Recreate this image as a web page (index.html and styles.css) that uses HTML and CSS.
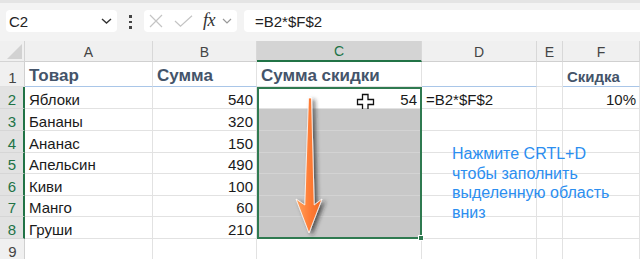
FILE: index.html
```html
<!DOCTYPE html>
<html lang="ru">
<head>
    <meta charset="UTF-8">
    <title>Заполнить вниз</title>
    <link rel="stylesheet" href="styles.css">
</head>
<body>
    <div class="formula-bar">
        <div class="name-box">
            <span>C2</span>
            <svg class="chev" width="11" height="6" viewBox="0 0 11 6"><path d="M1 1 L5.5 5 L10 1" fill="none" stroke="#333" stroke-width="1.4"/></svg>
        </div>
        <div class="dots"><i></i><i></i><i></i></div>
        <div class="func-box">
            <svg width="14" height="14" viewBox="0 0 14 14"><path d="M1 1 L13 13 M13 1 L1 13" stroke="#c4c4c4" stroke-width="1.2"/></svg>
            <svg class="check" width="19" height="12" viewBox="0 0 19 12"><path d="M1 6 L6.5 11.2 L18 0.8" fill="none" stroke="#c4c4c4" stroke-width="1.2"/></svg>
            <span class="fx">fx</span>
            <svg width="10" height="6" viewBox="0 0 10 6"><path d="M1 1 L5 5 L9 1" fill="none" stroke="#999" stroke-width="1.2"/></svg>
        </div>
        <div class="formula">=B2*$F$2</div>
    </div>

    <div class="sheet">
        <div class="corner"></div>
        <div class="colh">A</div>
        <div class="colh">B</div>
        <div class="colh active">C</div>
        <div class="colh">D</div>
        <div class="colh">E</div>
        <div class="colh">F</div>

        <div class="rowh">1</div>
        <div class="cell head tbl">Товар</div>
        <div class="cell head tbl">Сумма</div>
        <div class="cell head">Сумма скидки</div>
        <div class="cell tbl"></div>
        <div class="cell"></div>
        <div class="cell head small tbl">Скидка</div>

        <div class="rowh active">2</div>
        <div class="cell">Яблоки</div>
        <div class="cell num">540</div>
        <div class="cell num c2">54
            <svg class="cursor" width="19" height="18" viewBox="0 0 19 18"><path d="M6.5 1.5 H12 V6.5 H17.5 V11.5 H12 V16.5 H6.5 V11.5 H1.5 V6.5 H6.5 Z" fill="#fff" stroke="#111" stroke-width="1.3"/></svg>
        </div>
        <div class="cell">=B2*$F$2</div>
        <div class="cell"></div>
        <div class="cell num">10%</div>

        <div class="rowh active">3</div>
        <div class="cell">Бананы</div>
        <div class="cell num">320</div>
        <div class="cell fill"></div>
        <div class="cell"></div>
        <div class="cell"></div>
        <div class="cell"></div>

        <div class="rowh active">4</div>
        <div class="cell">Ананас</div>
        <div class="cell num">150</div>
        <div class="cell fill"></div>
        <div class="cell"></div>
        <div class="cell"></div>
        <div class="cell"></div>

        <div class="rowh active">5</div>
        <div class="cell">Апельсин</div>
        <div class="cell num">490</div>
        <div class="cell fill"></div>
        <div class="cell"></div>
        <div class="cell"></div>
        <div class="cell"></div>

        <div class="rowh active">6</div>
        <div class="cell">Киви</div>
        <div class="cell num">100</div>
        <div class="cell fill"></div>
        <div class="cell"></div>
        <div class="cell"></div>
        <div class="cell"></div>

        <div class="rowh active">7</div>
        <div class="cell">Манго</div>
        <div class="cell num">60</div>
        <div class="cell fill"></div>
        <div class="cell"></div>
        <div class="cell"></div>
        <div class="cell"></div>

        <div class="rowh active">8</div>
        <div class="cell">Груши</div>
        <div class="cell num">210</div>
        <div class="cell fill"></div>
        <div class="cell"></div>
        <div class="cell"></div>
        <div class="cell"></div>

        <div class="rowh">9</div>
        <div class="cell"></div>
        <div class="cell"></div>
        <div class="cell"></div>
        <div class="cell"></div>
        <div class="cell"></div>
        <div class="cell"></div>

        <div class="selection"><span class="handle"></span></div>

        <svg class="arrow" viewBox="0 0 165 152">
            <defs>
                <linearGradient id="og" x1="0" y1="0" x2="1" y2="0">
                    <stop offset="0" stop-color="#ffa45e"/>
                    <stop offset="0.5" stop-color="#ff7d36"/>
                    <stop offset="1" stop-color="#f06a25"/>
                </linearGradient>
                <filter id="sh" x="-50%" y="-10%" width="200%" height="130%">
                    <feDropShadow dx="3" dy="2" stdDeviation="2.2" flood-color="#222" flood-opacity="0.7"/>
                </filter>
            </defs>
            <path d="M51.5 11 L54.5 11 L57.2 118 L65 112 L52 146 L39 112 L47.8 118 Z" fill="url(#og)" stroke="#fff" stroke-width="0.8" filter="url(#sh)"/>
        </svg>

        <div class="note">Нажмите CRTL+D<br>чтобы заполнить<br>выделенную область<br>вниз</div>
    </div>
</body>
</html>
```

FILE: styles.css
```css
* {
    box-sizing: border-box;
}
body {
    margin: 0;
    width: 640px;
    height: 259px;
    overflow: hidden;
    background-color: #f3f3f3;
    font-family: 'Liberation Sans', Arial, sans-serif;
    color: #1a1a1a;
}
.formula-bar {
    height: 41px;
    display: flex;
    align-items: flex-start;
    padding: 7px 0 0 6px;
    border-top: 3px solid #e4e4e4;
}
.name-box, .func-box, .formula {
    height: 22px;
    background-color: #fff;
    border-radius: 4px;
    display: flex;
    align-items: center;
}
.name-box {
    width: 111px;
    padding: 0 5px 0 3px;
    font-size: 15px;
    color: #222;
    justify-content: space-between;
}
.dots {
    width: 3px;
    margin: 0 12px 0 12px;
    padding-top: 5px;
    display: flex;
    flex-direction: column;
    gap: 3px;
}
.dots i {
    display: block;
    width: 2.5px;
    height: 2.5px;
    background-color: #444;
}
.func-box {
    width: 93px;
    padding-left: 5px;
}
.func-box .check {
    margin-left: 11px;
}
.fx {
    font-family: 'Liberation Serif', serif;
    font-style: italic;
    font-size: 18px;
    color: #333;
    margin: -2px 7px 0 10px;
    letter-spacing: -0.5px;
}
.formula {
    flex: 1;
    margin-left: 7px;
    margin-right: -10px;
    padding-left: 11px;
    font-size: 15px;
    color: #222;
}
.sheet {
    display: grid;
    grid-template-columns: 25px 128px 104px 165px 115px 26px 77px;
    grid-template-rows: 21px 25px 22px 22px 22px 21px 22px 21px 22px 22px;
    background-color: #fff;
    position: relative;
}
.corner {
    background-color: #f0f0f0;
    border-right: 1px solid #d4d4d4;
    border-bottom: 1px solid #d4d4d4;
    position: relative;
}
.corner::after {
    content: "";
    position: absolute;
    right: 2px;
    bottom: 2px;
    border-style: solid;
    border-width: 0 0 15px 15px;
    border-color: transparent transparent #d2d2d2 transparent;
}
.colh {
    background-color: #f0f0f0;
    border-right: 1px solid #d8d8d8;
    border-bottom: 1px solid #d0d0d0;
    font-size: 14px;
    color: #444;
    display: flex;
    align-items: center;
    justify-content: center;
    padding-top: 1px;
}
.colh.active {
    background-color: #d4d4d4;
    color: #217346;
    border-bottom: 2px solid #217346;
}
.rowh {
    background-color: #f0f0f0;
    border-right: 1px solid #d0d0d0;
    border-bottom: 1px solid #e0e0e0;
    font-size: 15px;
    color: #444;
    display: flex;
    align-items: flex-end;
    justify-content: center;
    padding-left: 1px;
}
.rowh.active {
    background-color: #e2e2e2;
    color: #217346;
    border-right: 2px solid #217346;
    border-bottom-color: #d6d6d6;
}
.cell {
    border-right: 1px solid #e2e2e2;
    border-bottom: 1px solid #e2e2e2;
    font-size: 15px;
    display: flex;
    align-items: flex-end;
    padding: 0 3px 0 4px;
    white-space: nowrap;
    position: relative;
}
.cell.num {
    justify-content: flex-end;
}
.cell.head {
    font-weight: bold;
    font-size: 17px;
    color: #44546a;
}
.cell.head.small {
    font-size: 15px;
    padding-bottom: 1px;
}
.cell.tbl {
    border-bottom-color: #a9c6e8;
}
.cell.fill {
    background-color: #c8c8c8;
    border-right-color: #c8c8c8;
    border-bottom-color: #d3d3d3;
}
.cell.c2 {
    padding-right: 4px;
}
.cursor {
    position: absolute;
    left: 99px;
    top: 6px;
}
.selection, .arrow {
    position: absolute;
    grid-column: 4 / 5;
    grid-row: 3 / 10;
    top: 0;
    left: 0;
    width: 100%;
    height: 100%;
}
.selection {
    border: 2px solid #2f7a50;
}
.handle {
    position: absolute;
    right: -4px;
    bottom: -4px;
    width: 6px;
    height: 6px;
    background-color: #2f7a50;
    border: 1px solid #fff;
}
.note {
    position: absolute;
    grid-column: 5 / 8;
    grid-row: 5 / 11;
    top: 0;
    left: 0;
    padding: 13px 0 0 30px;
    font-size: 16px;
    line-height: 19.5px;
    color: #2b8ef0;
}
```
